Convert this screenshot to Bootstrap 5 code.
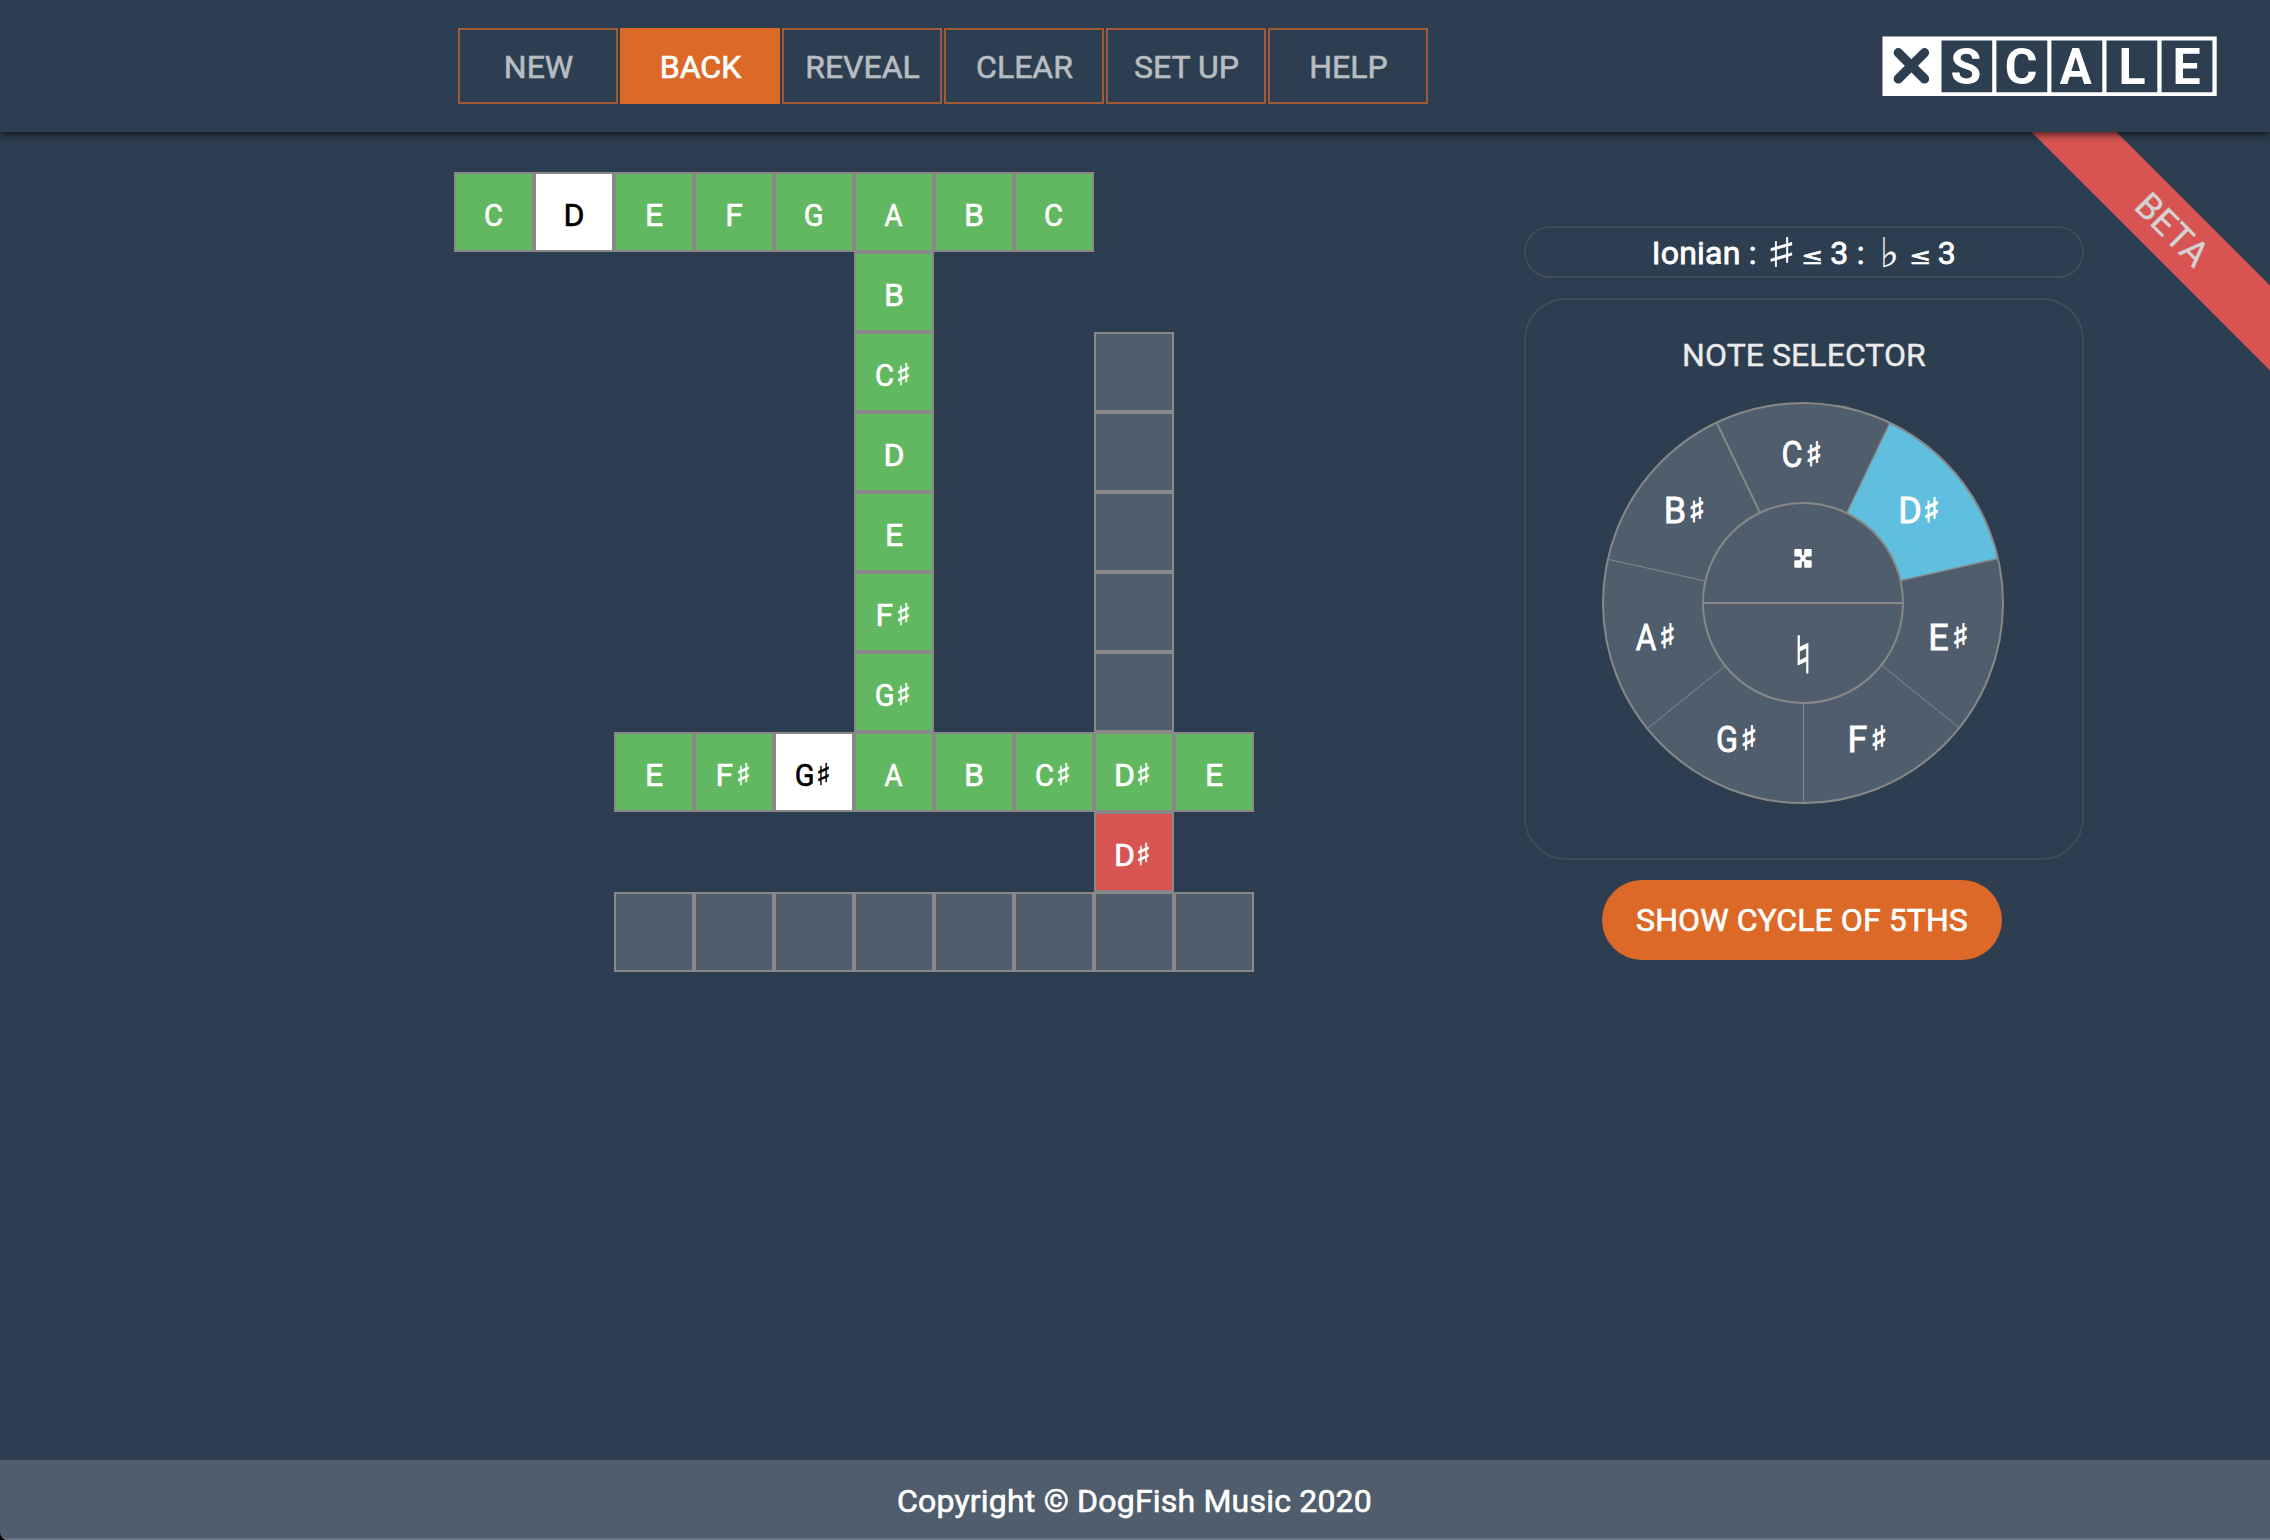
<!DOCTYPE html>
<html lang="en">
<head>
<meta charset="utf-8">
<meta name="viewport" content="width=device-width, initial-scale=1">
<title>XScale</title>
<link rel="stylesheet" href="https://cdn.jsdelivr.net/npm/bootstrap@5.3.0/dist/css/bootstrap.min.css">
<style>
:root { --ink: #2d3e50; --slate: #505d6c; --line: #888888; --orange: #dc6928; --green: #61b861; --red: #d75452; --blue: #60bfde; }
html { background: #000; }
body { font-family: Roboto, "Liberation Sans", sans-serif; font-size: 32px; font-weight: 400; line-height: 38px; color: #fff; background: #000; -webkit-text-stroke: .6px; }
.app { height: 1540px; background: var(--ink); border-bottom-left-radius: 8px; overflow: hidden; position: relative; }
.topbar { height: 132px; background: var(--ink); box-shadow: 0 2px 8px rgba(0,0,0,.75); padding: 0 53px 0 458px; position: relative; z-index: 2; }
.nav-set { gap: 2px; }
.topbar .btn { width: 160px; height: 76px; padding: 2px 0 0 1px; border: 2px solid var(--orange); border-radius: 0; color: #fff; font-size: 32px; font-weight: 400; line-height: 38px; opacity: .66; background: transparent; -webkit-text-stroke: .5px; }
.topbar .btn.active { background: var(--orange); opacity: 1; border-color: var(--orange); color: #fff; -webkit-text-stroke: .7px; }
.brand-logo text { font: 700 50px Roboto, sans-serif; fill: #fff; text-anchor: middle; -webkit-text-stroke: 0; }
.board { margin: 40px 0 0 454px; width: 800px; }
.tile { width: 80px; height: 80px; border: 2px solid var(--line); background: var(--slate); padding-top: 6px; }
.tile.ok { background: var(--green); }
.tile.bad { background: var(--red); }
.tile.given { background: #fff; color: #000; }
.tile b { width: 19.2px; display: flex; justify-content: center; font-weight: 400; }
.tile b.a { transform: scaleX(.86); }
.tile b.c { transform: scaleX(.91); }
.tile i { width: 19.2px; display: flex; justify-content: center; font: normal 30px/38px "DejaVu Sans", sans-serif; transform: scaleX(1.05); -webkit-text-stroke: .5px; }
.skip-2 { margin-left: 160px; } .skip-5 { margin-left: 400px; } .skip-8 { margin-left: 640px; }
.side { margin: 94px 186px 0 0; width: 560px; }
.criteria { height: 52px; border: 2px solid #414c5b; border-radius: 26px; }
.criteria svg, .wheel { display: block; overflow: visible; }
.criteria text { font: 400 32px Roboto, sans-serif; fill: #fff; letter-spacing: .25px; stroke: #fff; stroke-width: .8px; }
.criteria text.sym { font: 41px "DejaVu Sans", sans-serif; stroke-width: .1px; letter-spacing: 0; }
.selector { height: 562px; margin-top: 20px; border: 2px solid #414c5b; border-radius: 42px; padding-top: 36px; }
.selector h2 { font-size: 32px; font-weight: 400; line-height: 38px; color: #ebebeb; margin: 0 0 28px; letter-spacing: .06px; -webkit-text-stroke: .4px; }
.wheel { margin-left: 76px; }
.wheel text { font: 400 36px Roboto, sans-serif; fill: #fff; stroke: #fff; stroke-width: .8px; text-anchor: middle; }
.wheel text.acc { font: 33.5px "DejaVu Sans", sans-serif; }
.wheel text.nat { font: 51px "DejaVu Sans", sans-serif; }
.cycle { width: 400px; height: 80px; margin: 20px 0 0 78px; padding: 0 0 1px; border: 0; border-radius: 40px; background: var(--orange); color: #fff; font-size: 32px; font-weight: 400; letter-spacing: .07px; }
.ribbon { width: 520px; height: 60px; line-height: 60px; background: var(--red); color: #d3d3d3; font-size: 36px; text-align: center; position: absolute; left: 1912.5px; top: 200.5px; transform: rotate(45deg); z-index: 1; padding-right: 3px; -webkit-text-stroke: .3px; }
.foot { position: absolute; left: 0; right: 0; bottom: 0; height: 80px; padding: 4px 1px 0 0; background: var(--slate); border-bottom: 2px solid #6b7684; letter-spacing: .2px; }
</style>
</head>
<body>
<div class="app d-flex flex-column">
  <header class="topbar d-flex align-items-center justify-content-between">
    <nav class="nav-set d-flex">
      <button class="btn">NEW</button>
      <button class="btn active">BACK</button>
      <button class="btn">REVEAL</button>
      <button class="btn">CLEAR</button>
      <button class="btn">SET UP</button>
      <button class="btn">HELP</button>
    </nav>
    <svg class="brand-logo" width="335" height="60" viewBox="0 0 335 60" role="img" aria-label="XScale">
      <path fill="#fff" fill-rule="evenodd" d="M.5 .5H334.7V60H.5ZM59.5 4.5V56.3H110.2V4.5ZM114.4 4.5V56.3H165.3V4.5ZM169.4 4.5V56.3H220.3V4.5ZM224.5 4.5V56.3H275.3V4.5ZM279.6 4.5V56.3H330.4V4.5Z"/>
      <path d="M16.3 16.7L42.5 42.9M42.5 16.7L16.3 42.9" stroke="#2d3e50" stroke-width="9.3" stroke-linecap="round"/>
      <text x="84" y="47.5">S</text><text x="139" y="47.5">C</text><text x="193.7" y="47.5" textLength="32" lengthAdjust="spacingAndGlyphs">A</text><text x="250" y="47.5">L</text><text x="304.5" y="47.5">E</text>
    </svg>
  </header>

  <main class="d-flex justify-content-between align-items-start">
    <section class="board">
      <div class="d-flex">
        <div class="tile ok d-flex align-items-center justify-content-center"><b class="c">C</b></div>
        <div class="tile given d-flex align-items-center justify-content-center"><b>D</b></div>
        <div class="tile ok d-flex align-items-center justify-content-center"><b>E</b></div>
        <div class="tile ok d-flex align-items-center justify-content-center"><b>F</b></div>
        <div class="tile ok d-flex align-items-center justify-content-center"><b class="c">G</b></div>
        <div class="tile ok d-flex align-items-center justify-content-center"><b class="a">A</b></div>
        <div class="tile ok d-flex align-items-center justify-content-center"><b>B</b></div>
        <div class="tile ok d-flex align-items-center justify-content-center"><b class="c">C</b></div>
      </div>
      <div class="d-flex">
        <div class="tile ok skip-5 d-flex align-items-center justify-content-center"><b>B</b></div>
      </div>
      <div class="d-flex">
        <div class="tile ok skip-5 d-flex align-items-center justify-content-center"><b class="c">C</b><i>♯</i></div>
        <div class="tile skip-2"></div>
      </div>
      <div class="d-flex">
        <div class="tile ok skip-5 d-flex align-items-center justify-content-center"><b>D</b></div>
        <div class="tile skip-2"></div>
      </div>
      <div class="d-flex">
        <div class="tile ok skip-5 d-flex align-items-center justify-content-center"><b>E</b></div>
        <div class="tile skip-2"></div>
      </div>
      <div class="d-flex">
        <div class="tile ok skip-5 d-flex align-items-center justify-content-center"><b>F</b><i>♯</i></div>
        <div class="tile skip-2"></div>
      </div>
      <div class="d-flex">
        <div class="tile ok skip-5 d-flex align-items-center justify-content-center"><b class="c">G</b><i>♯</i></div>
        <div class="tile skip-2"></div>
      </div>
      <div class="d-flex">
        <div class="tile ok skip-2 d-flex align-items-center justify-content-center"><b>E</b></div>
        <div class="tile ok d-flex align-items-center justify-content-center"><b>F</b><i>♯</i></div>
        <div class="tile given d-flex align-items-center justify-content-center"><b class="c">G</b><i>♯</i></div>
        <div class="tile ok d-flex align-items-center justify-content-center"><b class="a">A</b></div>
        <div class="tile ok d-flex align-items-center justify-content-center"><b>B</b></div>
        <div class="tile ok d-flex align-items-center justify-content-center"><b class="c">C</b><i>♯</i></div>
        <div class="tile ok d-flex align-items-center justify-content-center"><b>D</b><i>♯</i></div>
        <div class="tile ok d-flex align-items-center justify-content-center"><b>E</b></div>
      </div>
      <div class="d-flex">
        <div class="tile bad skip-8 d-flex align-items-center justify-content-center"><b>D</b><i>♯</i></div>
      </div>
      <div class="d-flex">
        <div class="tile skip-2"></div><div class="tile"></div><div class="tile"></div><div class="tile"></div>
        <div class="tile"></div><div class="tile"></div><div class="tile"></div><div class="tile"></div>
      </div>
    </section>

    <aside class="side">
      <div class="criteria">
        <svg width="556" height="48" viewBox="0 0 556 48">
          <text x="125.700" y="36">Ionian :</text>
          <text class="sym" x="239.200" y="38.600" textLength="32.300" lengthAdjust="spacingAndGlyphs">♯</text>
          <text transform="translate(276.500 36) scale(1.250 .76)">≤</text>
          <text x="304.300" y="36">3 :</text>
          <text class="sym" x="353.500" y="38.500">♭</text>
          <text transform="translate(384.500 36) scale(1.250 .76)">≤</text>
          <text x="411.700" y="36">3</text>
        </svg>
      </div>
      <div class="selector">
        <h2 class="text-center">NOTE SELECTOR</h2>
        <svg class="wheel" width="402" height="402" viewBox="-201 -201 402 402">
          <circle r="200" fill="#505d6c"/>
          <path d="M86.8 -180.2A200 200 0 0 1 195 -44.5L97.5 -22.3A100 100 0 0 0 43.4 -90.1Z" fill="#60bfde"/>
          <g stroke="#888888" fill="none">
            <circle r="200" stroke-width="2"/>
            <circle r="100" stroke-width="2"/>
            <path d="M-100 0H100M-86.3 -180.2L-43.2 -90.8" stroke-width="2"/>
            <path d="M86.8 -180.2L43.9 -90.1M195 -44.5L97.5 -22.3" stroke-width="1.3"/>
            <path d="M-194.8 -43.7L-98 -22M-155 125L-78 63M.5 100V200M156 124.5L79 62.5" stroke-width="1"/>
          </g>
          <text x="-11" y="-136" textLength="21" lengthAdjust="spacingAndGlyphs">C</text><text class="acc" x="11" y="-137.500" textLength="17.900" lengthAdjust="spacingAndGlyphs">♯</text>
          <text x="107" y="-80">D</text><text class="acc" x="128.500" y="-81.500" textLength="17.900" lengthAdjust="spacingAndGlyphs">♯</text>
          <text x="135.500" y="46.500">E</text><text class="acc" x="157.500" y="45" textLength="17.900" lengthAdjust="spacingAndGlyphs">♯</text>
          <text x="54.500" y="148.700">F</text><text class="acc" x="76" y="147.200" textLength="17.900" lengthAdjust="spacingAndGlyphs">♯</text>
          <text x="-76" y="148.700" textLength="22" lengthAdjust="spacingAndGlyphs">G</text><text class="acc" x="-54" y="147.200" textLength="17.900" lengthAdjust="spacingAndGlyphs">♯</text>
          <text x="-157" y="46.500" textLength="20.500" lengthAdjust="spacingAndGlyphs">A</text><text class="acc" x="-135.500" y="45" textLength="17.900" lengthAdjust="spacingAndGlyphs">♯</text>
          <text x="-128" y="-80">B</text><text class="acc" x="-106" y="-81.500" textLength="17.900" lengthAdjust="spacingAndGlyphs">♯</text>
          <g fill="#fff">
            <rect x="-8.700" y="-54" width="7.500" height="7.500" rx="1"/><rect x="1.200" y="-54" width="7.500" height="7.500" rx="1"/>
            <rect x="-8.700" y="-42.700" width="7.500" height="7.500" rx="1"/><rect x="1.200" y="-42.700" width="7.500" height="7.500" rx="1"/>
            <path d="M-3.500 -49L3.500 -40.200M3.500 -49L-3.500 -40.200" stroke="#fff" stroke-width="3.200"/>
          </g>
          <text class="nat" x="0" y="70">♮</text>
        </svg>
      </div>
      <button class="btn cycle">SHOW CYCLE OF 5THS</button>
    </aside>
  </main>

  <div class="ribbon">BETA</div>
  <footer class="foot d-flex align-items-center justify-content-center">Copyright © DogFish Music 2020</footer>
</div>
<script src="https://cdn.jsdelivr.net/npm/bootstrap@5.3.0/dist/js/bootstrap.bundle.min.js"></script>
</body>
</html>
